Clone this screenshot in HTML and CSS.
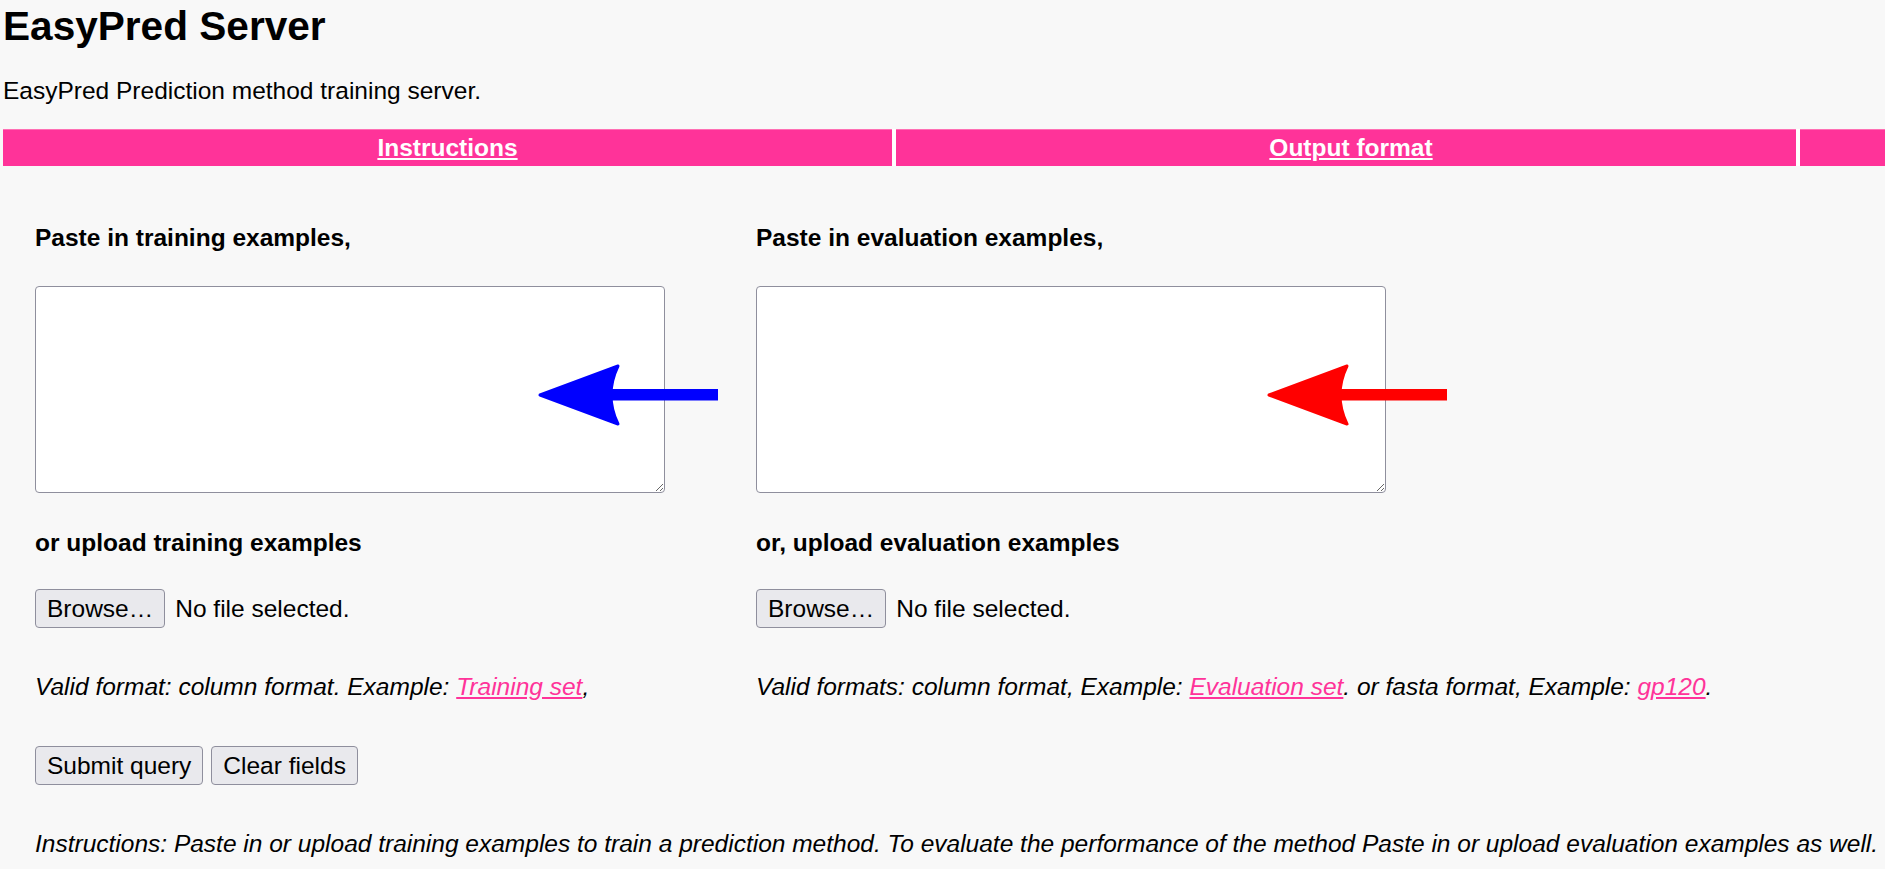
FILE: index.html
```html
<!DOCTYPE html>
<html lang="en">
<head>
<meta charset="utf-8">
<title>EasyPred Server</title>
<link rel="stylesheet" href="styles.css">
</head>
<body>
<h1 class="title">EasyPred Server</h1>
<p class="intro">EasyPred Prediction method training server.</p>
<nav class="navbar">
  <div class="navcell nav1"><a href="#">Instructions</a></div>
  <div class="navcell nav2"><a href="#">Output format</a></div>
  <div class="navcell nav3"></div>
</nav>
<form class="form">
  <div class="grid">
    <div class="label">Paste in training examples,</div>
    <div class="label">Paste in evaluation examples,</div>

    <div class="areacell r2">
      <textarea class="area"></textarea>
      <svg class="arrow arrow-blue" viewBox="0 0 180 62" width="180" height="62" aria-hidden="true">
        <path d="M2,31 L80,2 Q66,31 80,60 Z" fill="#0000ff" stroke="#0000ff" stroke-width="3" stroke-linejoin="round"/>
        <rect x="70" y="25" width="110" height="11.5" fill="#0000ff"/>
      </svg>
    </div>
    <div class="areacell r2">
      <textarea class="area"></textarea>
      <svg class="arrow arrow-red" viewBox="0 0 180 62" width="180" height="62" aria-hidden="true">
        <path d="M2,31 L80,2 Q66,31 80,60 Z" fill="#ff0000" stroke="#ff0000" stroke-width="3" stroke-linejoin="round"/>
        <rect x="70" y="25" width="110" height="11.5" fill="#ff0000"/>
      </svg>
    </div>

    <div class="label r3">or upload training examples</div>
    <div class="label r3">or, upload evaluation examples</div>

    <div class="file r4"><button type="button" class="btn">Browse…</button><span class="filename">No file selected.</span></div>
    <div class="file r4"><button type="button" class="btn">Browse…</button><span class="filename">No file selected.</span></div>

    <div class="note r5">Valid format: column format. Example: <a href="#">Training set</a>,</div>
    <div class="note r5">Valid formats: column format, Example: <a href="#">Evaluation set</a>. or fasta format, Example: <a href="#">gp120</a>.</div>

    <div class="actions r6"><button type="submit" class="btn">Submit query</button><button type="reset" class="btn">Clear fields</button></div>
  </div>
  <p class="note instr">Instructions: Paste in or upload training examples to train a prediction method. To evaluate the performance of the method Paste in or upload evaluation examples as well.</p>
</form>
</body>
</html>
```

FILE: styles.css
```css
html, body {
  margin: 0;
  padding: 0;
  background: #f8f8f8;
  overflow: hidden;
}
body {
  padding: 3px 0 0 3px;
  font-family: "Liberation Sans", Arial, sans-serif;
  font-size: 24.5px;
  line-height: 28px;
  color: #000;
}
.title {
  margin: 0;
  font-size: 40.6px;
  line-height: 46px;
  font-weight: bold;
}
.intro {
  margin: 28px 0 0;
}
.navbar {
  margin-top: 24px;
  display: flex;
  gap: 4px;
  background: #ffffff;
  width: max-content;
}
.navcell {
  box-sizing: border-box;
  background: #ff3399;
  border-top: 1px solid #ff6fb4;
  padding: 4px 0;
  height: 37px;
  text-align: center;
  flex: none;
}
.nav1 { width: 889px; }
.nav2 { width: 900px; padding-left: 10px; }
.nav3 { width: 900px; }
.navcell a {
  color: #ffffff;
  font-weight: bold;
  text-decoration: underline;
}
.form {
  margin-top: 58px;
  padding-left: 32px;
}
.grid {
  display: grid;
  grid-template-columns: 721px 1fr;
  align-items: start;
}
.label {
  font-weight: bold;
}
.r2 { margin-top: 34px; }
.r3 { margin-top: 36px; }
.r4 { margin-top: 32px; }
.r5 { margin-top: 45px; }
.r6 { margin-top: 45px; }
.areacell {
  position: relative;
  height: 207px;
}
.area {
  display: block;
  box-sizing: border-box;
  width: 630px;
  height: 207px;
  margin: 0;
  background: #ffffff;
  border: 1px solid #8f8f9d;
  border-radius: 4px;
  font-family: "Liberation Mono", monospace;
  font-size: 16px;
}
.arrow {
  position: absolute;
  top: 78px;
}
.arrow-blue { left: 503px; }
.arrow-red { left: 511px; }
.file {
  display: flex;
  align-items: center;
  gap: 10px;
}
.btn {
  font-family: "Liberation Sans", Arial, sans-serif;
  font-size: 24.5px;
  line-height: 27px;
  color: #000;
  background: #e9e9ed;
  border: 1px solid #8f8f9d;
  border-radius: 4px;
  padding: 5px 11px;
  margin: 0;
}
.note {
  font-style: italic;
}
.note a {
  color: #ff3399;
  text-decoration: underline;
}
.actions {
  display: flex;
  gap: 8px;
}
.instr {
  margin: 45px 0 0;
  white-space: nowrap;
}
```
